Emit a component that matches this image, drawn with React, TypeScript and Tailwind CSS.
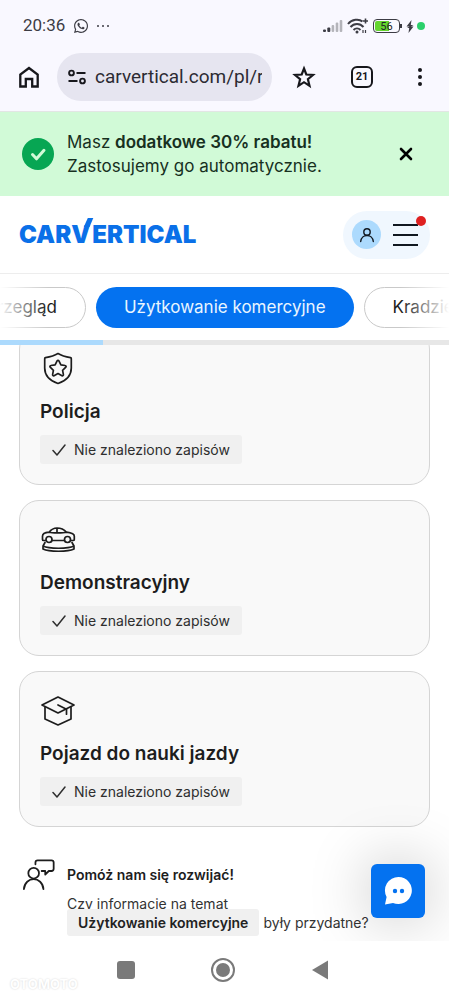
import type { ReactNode } from "react";
import { FaWhatsapp } from "react-icons/fa";

function Icon({ children, className = "size-9", strokeWidth = 1.7 }: { children: ReactNode; className?: string; strokeWidth?: number }) {
  return (
    <svg viewBox="0 0 36 36" className={className} fill="none" stroke="currentColor" strokeWidth={strokeWidth} strokeLinecap="round" strokeLinejoin="round" aria-hidden="true">
      {children}
    </svg>
  );
}

const cards = [
  {
    title: "Policja",
    icon: (
      <>
        <path d="M18 2.500c4 2.400 8 3.400 12.500 4.200.5.100.8.500.8 1V17c0 7.500-4.500 12.500-13.300 15.500C9.200 29.500 4.700 24.500 4.700 17V7.700c0-.5.300-.9.800-1C10 5.900 14 4.900 18 2.500Z" />
        <path d="M18 9.300c.4 0 .7.200.9.600l2 4 4.300.6c.9.100 1.200 1.100.6 1.700l-3.200 3.100.8 4.400c.1.800-.7 1.400-1.400 1L18 22.600l-4 2.100c-.7.400-1.500-.2-1.400-1l.8-4.400-3.200-3.100c-.6-.6-.3-1.600.6-1.700l4.300-.6 2-4c.2-.4.5-.6.9-.6Z" />
      </>
    ),
  },
  {
    title: "Demonstracyjny",
    icon: (
      <>
        <path d="M9 10.200C11.500 7 14 6 17 6s6.500.8 9.500 4.200M9 10.200c-4 .4-6.500 1.600-6.500 4v3.300c0 .7.500 1 1.200 1H6M26.500 10.200c5 .6 7.800 2 7.800 4v3.300c0 .7-.5 1-1.200 1H31M12 18.500h12M9 10.200c3 1 14 1 17.500 0M17 6v4.700" />
        <circle cx="9" cy="17.500" r="3" />
        <circle cx="27.500" cy="17.500" r="3" />
        <path d="M5 20.500 3 24c6 3 25 3 31 0l-2-3.500M3 24v3c6 3 25 3 31 0v-3" />
      </>
    ),
  },
  {
    title: "Pojazd do nauki jazdy",
    icon: (
      <>
        <path d="M18 4 34 12 18 20 2 12Z" />
        <path d="M5 14v12l13 6 13-6V14M18 12l8.500 4.200v5" />
      </>
    ),
  },
];

function StatusBar() {
  return (
    <div className="flex h-[52px] items-center justify-between pr-6 pl-[23px] font-['Roboto',sans-serif]">
      <div className="flex items-center gap-2 text-[17px] text-[#3c3c44]">
        <span>20:36</span>
        <FaWhatsapp size={16} />
        <span className="flex gap-[3px]">
          <i className="size-[2px] rounded-full bg-[#3c3c44]" />
          <i className="size-[2px] rounded-full bg-[#3c3c44]" />
          <i className="size-[2px] rounded-full bg-[#3c3c44]" />
        </span>
      </div>
      <div className="flex items-center text-[#3c3c44]">
        <svg viewBox="0 0 20 12" className="mr-1 h-3 w-5" fill="#3c3c44" aria-hidden="true">
          <rect x="0" y="9.500" width="3" height="2.500" rx="1" />
          <rect x="4.300" y="7.500" width="3" height="4.500" rx="1" />
          <g fill="#b4b4ba">
            <rect x="8.600" y="5" width="2.600" height="7" rx="1" />
            <rect x="12.700" y="2.500" width="2.600" height="9.500" rx="1" />
            <rect x="16.700" y="0" width="2.600" height="12" rx="1" />
          </g>
        </svg>
        <svg viewBox="0 0 22 16" className="mr-1 h-4 w-[22px]" fill="none" stroke="#3c3c44" strokeWidth="2" aria-hidden="true">
          <path d="M1 6C5 1 12 .5 15.500 3.500M3.500 9C7 5 13 5 16.500 9M6.500 12c2-2 5-2 7 0" />
          <circle cx="10" cy="14" r="1.500" fill="#3c3c44" stroke="none" />
          <path d="M16 3h5M18.500 .5v5" strokeWidth="1.600" />
          <path d="M16 12v3M18.500 12v3" strokeWidth="1.200" />
        </svg>
        <span className="flex h-[14px] w-[27px] rounded-[4px] border border-[#3c3c44] p-px">
          <span className="flex w-full items-center justify-center rounded-[2px] bg-linear-to-r from-[#65d62f] from-60% to-transparent to-60% text-[11px] leading-none text-[#22252a]">56</span>
        </span>
        <i className="h-1 w-[2px] bg-[#3c3c44]" />
        <svg viewBox="0 0 8 13" className="ml-1 h-[13px] w-2" fill="#3c3c44" aria-hidden="true">
          <path d="M5.500 0 .500 6.500 3.500 6.500 1 8 3.200 8 2.500 13 7.500 6.500 5 6.500 7.500 5 4.800 5Z" />
        </svg>
        <i className="ml-[3px] size-2 rounded-full bg-[#2bd06b]" />
      </div>
    </div>
  );
}

function AddressBar() {
  return (
    <div className="flex h-[60px] items-start border-b border-[#e2e6e4] pt-px pr-[15px] pl-4 text-[#17171c]">
      <button aria-label="Strona główna" className="mr-4 flex h-12 w-[25px] items-center justify-center">
        <svg viewBox="0 0 22 24" className="h-6 w-[22px]" fill="none" stroke="currentColor" strokeWidth="2.300" aria-hidden="true">
          <path d="M2.300 21.500V9.500L11 3l8.700 6.500v12h-5.500V14H7.800v7.500Z" />
        </svg>
      </button>
      <div className="flex h-12 min-w-0 flex-1 items-center gap-2 rounded-full bg-[#e6e5f0] pr-[10px] pl-[10px]">
        <svg viewBox="0 0 20 18" className="h-[18px] w-5 shrink-0" fill="none" stroke="currentColor" strokeWidth="1.900" aria-hidden="true">
          <circle cx="4.500" cy="5" r="2.400" />
          <circle cx="15.500" cy="13" r="2.400" />
          <path d="M9.500 5h9M1.500 13h9" />
        </svg>
        <input aria-label="Adres" readOnly defaultValue="carvertical.com/pl/raport" className="w-full min-w-0 bg-transparent font-['Roboto',sans-serif] text-[19px] text-[#2c2b33] outline-none" />
      </div>
      <button aria-label="Dodaj zakładkę" className="ml-[18px] flex h-12 w-7 items-center justify-center">
        <svg viewBox="0 0 24 24" className="size-6" fill="none" stroke="currentColor" strokeWidth="2.200" aria-hidden="true">
          <path d="m12 3.500 2.300 6 6.700.5-5.100 4.200 1.600 6.600-5.500-3.600-5.500 3.600 1.600-6.600L3 10l6.700-.5Z" />
        </svg>
      </button>
      <button aria-label="Karty" className="ml-8 flex h-12 w-6 items-center justify-center">
        <span className="flex size-[22px] items-center justify-center rounded-[6px] border-2 border-[#17171c] font-['Roboto',sans-serif] text-[11px] font-bold">21</span>
      </button>
      <button aria-label="Menu przeglądarki" className="ml-8 flex h-12 w-7 flex-col items-center justify-center gap-[3px]">
        <i className="size-1 rounded-full bg-[#17171c]" />
        <i className="size-1 rounded-full bg-[#17171c]" />
        <i className="size-1 rounded-full bg-[#17171c]" />
      </button>
    </div>
  );
}

function DiscountBanner() {
  return (
    <div className="flex items-center bg-[#d1fad7] px-[22px] py-[18px] text-[#17301f]">
      <svg viewBox="0 0 32 32" className="mr-[13px] size-8 shrink-0" aria-hidden="true">
        <circle cx="16" cy="16" r="16" fill="#07a653" />
        <path d="m10.500 16.500 4 4.300 7.500-8.500" fill="none" stroke="#d1fad7" strokeWidth="3" strokeLinecap="round" strokeLinejoin="round" />
      </svg>
      <p className="flex-1 text-[17px] leading-6">
        Masz <b className="font-semibold">dodatkowe 30% rabatu!</b>
        <br />
        Zastosujemy go automatycznie.
      </p>
      <button aria-label="Zamknij" className="flex w-[42px] justify-center text-black">
        <svg viewBox="0 0 14 14" className="size-[14px]" fill="none" stroke="currentColor" strokeWidth="2.600" strokeLinecap="round" aria-hidden="true">
          <path d="m2 2 10 10M12 2 2 12" />
        </svg>
      </button>
    </div>
  );
}

function SiteHeader() {
  return (
    <header className="flex h-[78px] items-center justify-between border-b border-[#ededed] px-[19px]">
      <a href="#" aria-label="carVertical" className="flex text-[24px] leading-7 font-black text-[#0a70e8]">
        <span>CAR</span>
        <span className="relative mr-[2px]">
          V
          <svg viewBox="0 0 24 10" className="absolute -top-1 left-0 h-[10px] w-6" aria-hidden="true">
            <path d="M12.800 10 16.800 1h5.500L18.500 10Z" fill="currentColor" />
          </svg>
        </span>
        <span>ERTICAL</span>
      </a>
      <div className="flex h-12 items-center gap-3 rounded-full bg-[#f0f7fe] pr-3 pl-[9px]">
        <button aria-label="Konto" className="flex size-[29px] items-center justify-center rounded-full bg-[#acdafd]">
          <svg viewBox="0 0 16 16" className="size-4" fill="none" stroke="#111820" strokeWidth="1.400" strokeLinecap="round" aria-hidden="true">
            <circle cx="8" cy="5" r="3.200" />
            <path d="M1.700 14.500C2.500 6.500 13.500 6.500 14.300 14.500" />
          </svg>
        </button>
        <button aria-label="Menu" className="relative flex w-[25px] flex-col gap-2">
          <i className="h-[2px] bg-[#111820]" />
          <i className="h-[2px] bg-[#111820]" />
          <i className="h-[2px] bg-[#111820]" />
          <span className="absolute -top-2 -right-2 size-[10px] rounded-full bg-[#df2020]" />
        </button>
      </div>
    </header>
  );
}

function SectionTabs() {
  return (
    <nav className="relative bg-white">
      <div className="flex justify-center gap-[10px] overflow-hidden pt-[13px] pb-3 text-[17px]">
        <button className="h-[41px] shrink-0 rounded-full border border-[#c9c9c9] px-7">Przegląd</button>
        <button className="h-[41px] shrink-0 rounded-full bg-[#0472f0] px-7 text-[#e9f5ff]">Użytkowanie komercyjne</button>
        <button className="h-[41px] shrink-0 rounded-full border border-[#c9c9c9] px-7">Kradzież</button>
      </div>
      <div className="pointer-events-none absolute inset-y-0 left-0 w-12 bg-linear-to-r from-white to-transparent" />
      <div className="pointer-events-none absolute inset-y-0 right-0 w-12 bg-linear-to-l from-white to-transparent" />
      <div className="relative h-[5px] bg-[#e7e7e7]">
        <div className="h-full w-[23%] bg-[#acdafd]" />
      </div>
    </nav>
  );
}

function RecordCard({ title, icon }: { title: string; icon: ReactNode }) {
  return (
    <section className="rounded-[20px] border border-[#d5d5d5] bg-[#f9f9f9] px-5 pt-[21px] pb-5">
      <Icon>{icon}</Icon>
      <h2 className="mt-[11px] text-[19px] leading-7 font-semibold">{title}</h2>
      <p className="mt-[9px] inline-flex h-[29px] items-center gap-2 rounded-[3px] bg-[#f0f0f0] px-3 text-[14px] text-[#2e2e2e]">
        <svg viewBox="0 0 14 12" className="h-3 w-[14px]" fill="none" stroke="currentColor" strokeWidth="1.500" strokeLinecap="round" strokeLinejoin="round" aria-hidden="true">
          <path d="m1 6.500 4 4.500L13 1" />
        </svg>
        Nie znaleziono zapisów
      </p>
    </section>
  );
}

function Feedback() {
  return (
    <section className="mt-8 flex gap-3 pl-1">
      <Icon className="size-8 shrink-0" strokeWidth={2}>
        <circle cx="12" cy="16" r="6" />
        <path d="M1 34c1-15 21-15 22 0M14 6V4c0-1.500 1-2.500 2.500-2.500H32c1.500 0 2.500 1 2.500 2.500v7c0 1.500-1 2.500-2.500 2.500h-3L25 17.500v-4h-4" />
      </Icon>
      <div className="text-[14px] leading-[19px]">
        <h3 className="mt-[6px] mb-[10px] font-semibold">Pomóż nam się rozwijać!</h3>
        <p className="text-[#333]">
          Czy informacje na temat
          <br />
          <span className="mr-1 rounded-[3px] bg-[#f0f0f0] px-[11px] py-[5px] font-semibold text-[#222]">Użytkowanie komercyjne</span>
          były przydatne?
        </p>
      </div>
    </section>
  );
}

function SystemNav() {
  return (
    <div className="relative flex h-[57px] items-center justify-center gap-[76px] bg-white pr-1">
      <button aria-label="Ostatnie aplikacje" className="size-[18px] rounded-[3px] bg-[#7a7a7a]" />
      <button aria-label="Ekran główny" className="flex size-6 items-center justify-center rounded-full border-2 border-[#7a7a7a]">
        <i className="size-[14px] rounded-full bg-[#7a7a7a]" />
      </button>
      <button aria-label="Wstecz">
        <svg viewBox="0 0 18 20" className="h-5 w-[18px]" fill="#7a7a7a" aria-hidden="true">
          <path d="M1 10 17 .500v19Z" />
        </svg>
      </button>
      <span className="absolute bottom-1 left-[10px] text-[13px] font-bold text-white text-shadow-[0_0_2px_rgba(0,0,0,0.18)]">OTOMOTO</span>
    </div>
  );
}

export default function App() {
  return (
    <div className="flex min-h-screen flex-col bg-white font-['Inter',sans-serif] text-[#1d1d1d]">
      <div className="bg-[#f9f8ff]">
        <StatusBar />
        <AddressBar />
      </div>
      <DiscountBanner />
      <SiteHeader />
      <SectionTabs />
      <main className="relative flex-1 overflow-hidden px-[19px]">
        <div className="-mt-4 flex flex-col gap-[15px]">
          {cards.map((card) => (
            <RecordCard key={card.title} title={card.title} icon={card.icon} />
          ))}
        </div>
        <Feedback />
        <button aria-label="Czat" className="absolute right-6 bottom-[23px] flex size-[54px] items-center justify-center rounded-[6px] bg-[#0472f0] shadow-[0_0_60px_rgba(0,0,0,0.25)]">
          <svg viewBox="0 0 28 28" className="size-7" aria-hidden="true">
            <path d="M14.500 0A13.500 13.500 0 1 1 9 25.900L1 27.500 2.600 20A13.500 13.500 0 0 1 14.500 0Z" fill="#fff" />
            <circle cx="11" cy="14" r="2.200" fill="#0472f0" />
            <circle cx="18" cy="14" r="2.200" fill="#0472f0" />
          </svg>
        </button>
      </main>
      <SystemNav />
    </div>
  );
}
